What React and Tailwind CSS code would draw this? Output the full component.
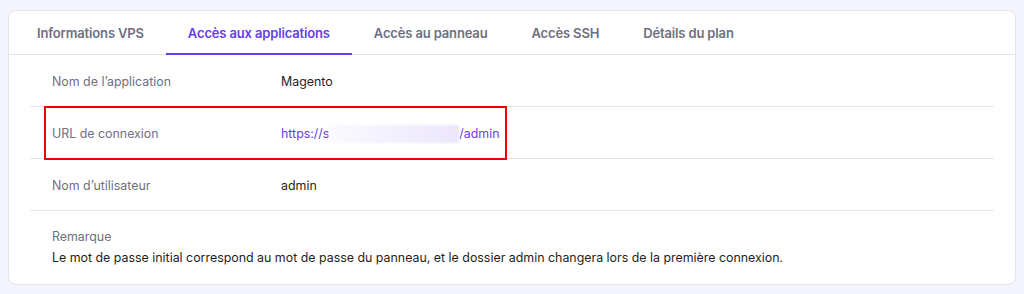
import React from "react";

const tabs = [
  "Informations VPS",
  "Accès aux applications",
  "Accès au panneau",
  "Accès SSH",
  "Détails du plan",
];

function Row({ label, children, highlight }) {
  return (
    <div className="relative flex items-center h-[52px] pt-[3px] border-b border-[#e3e3e8] px-[22px]">
      {highlight && (
        <div className="absolute left-[14px] top-[-1px] w-[463px] h-[54px] border-2 border-[#f20000]" />
      )}
      <div className="w-[229px] text-[#6d7081]">{label}</div>
      <div className="text-[#1d1e20]">{children}</div>
    </div>
  );
}

export default function App() {
  return (
    <div
      className="w-[1024px] h-[294px] bg-[#f4f4fe] pt-[10px] pl-[8px] text-[12.4px]"
      style={{ fontFamily: "Inter, 'Noto Sans', sans-serif" }}
    >
      <div className="w-[1008px] h-[275px] bg-white border border-[#e3e3e8] rounded-[8px] overflow-hidden">
        <div className="flex h-[44px] border-b border-[#e3e3e8] pl-[6px] text-[13px] tracking-[-0.15px]">
          {tabs.map((t, i) => (
            <div
              key={t}
              className={
                i === 1
                  ? "flex items-center pt-[3px] px-[22px] font-semibold text-[#673de6] border-b-2 border-[#673de6] -mb-px"
                  : "flex items-center pt-[3px] px-[22px] font-semibold text-[#6d7081]"
              }
            >
              {t}
            </div>
          ))}
        </div>
        <div className="mx-[21px]">
          <Row label="Nom de l’application">Magento</Row>
          <Row label="URL de connexion" highlight>
            <span className="flex items-center text-[#673de6]">
              https://s
              <span className="inline-block w-[130px] h-[18px] bg-gradient-to-r from-[#fbfaff] via-[#f3f0fe] to-[#ece6fd] blur-[1px]" />
              /admin
            </span>
          </Row>
          <Row label="Nom d’utilisateur">admin</Row>
          <div className="px-[22px] pt-[17px]">
            <div className="text-[#6d7081]">Remarque</div>
            <div className="text-[#1d1e20] mt-[2px]">
              Le mot de passe initial correspond au mot de passe du panneau, et le dossier admin changera lors de la première connexion.
            </div>
          </div>
        </div>
      </div>
    </div>
  );
}
